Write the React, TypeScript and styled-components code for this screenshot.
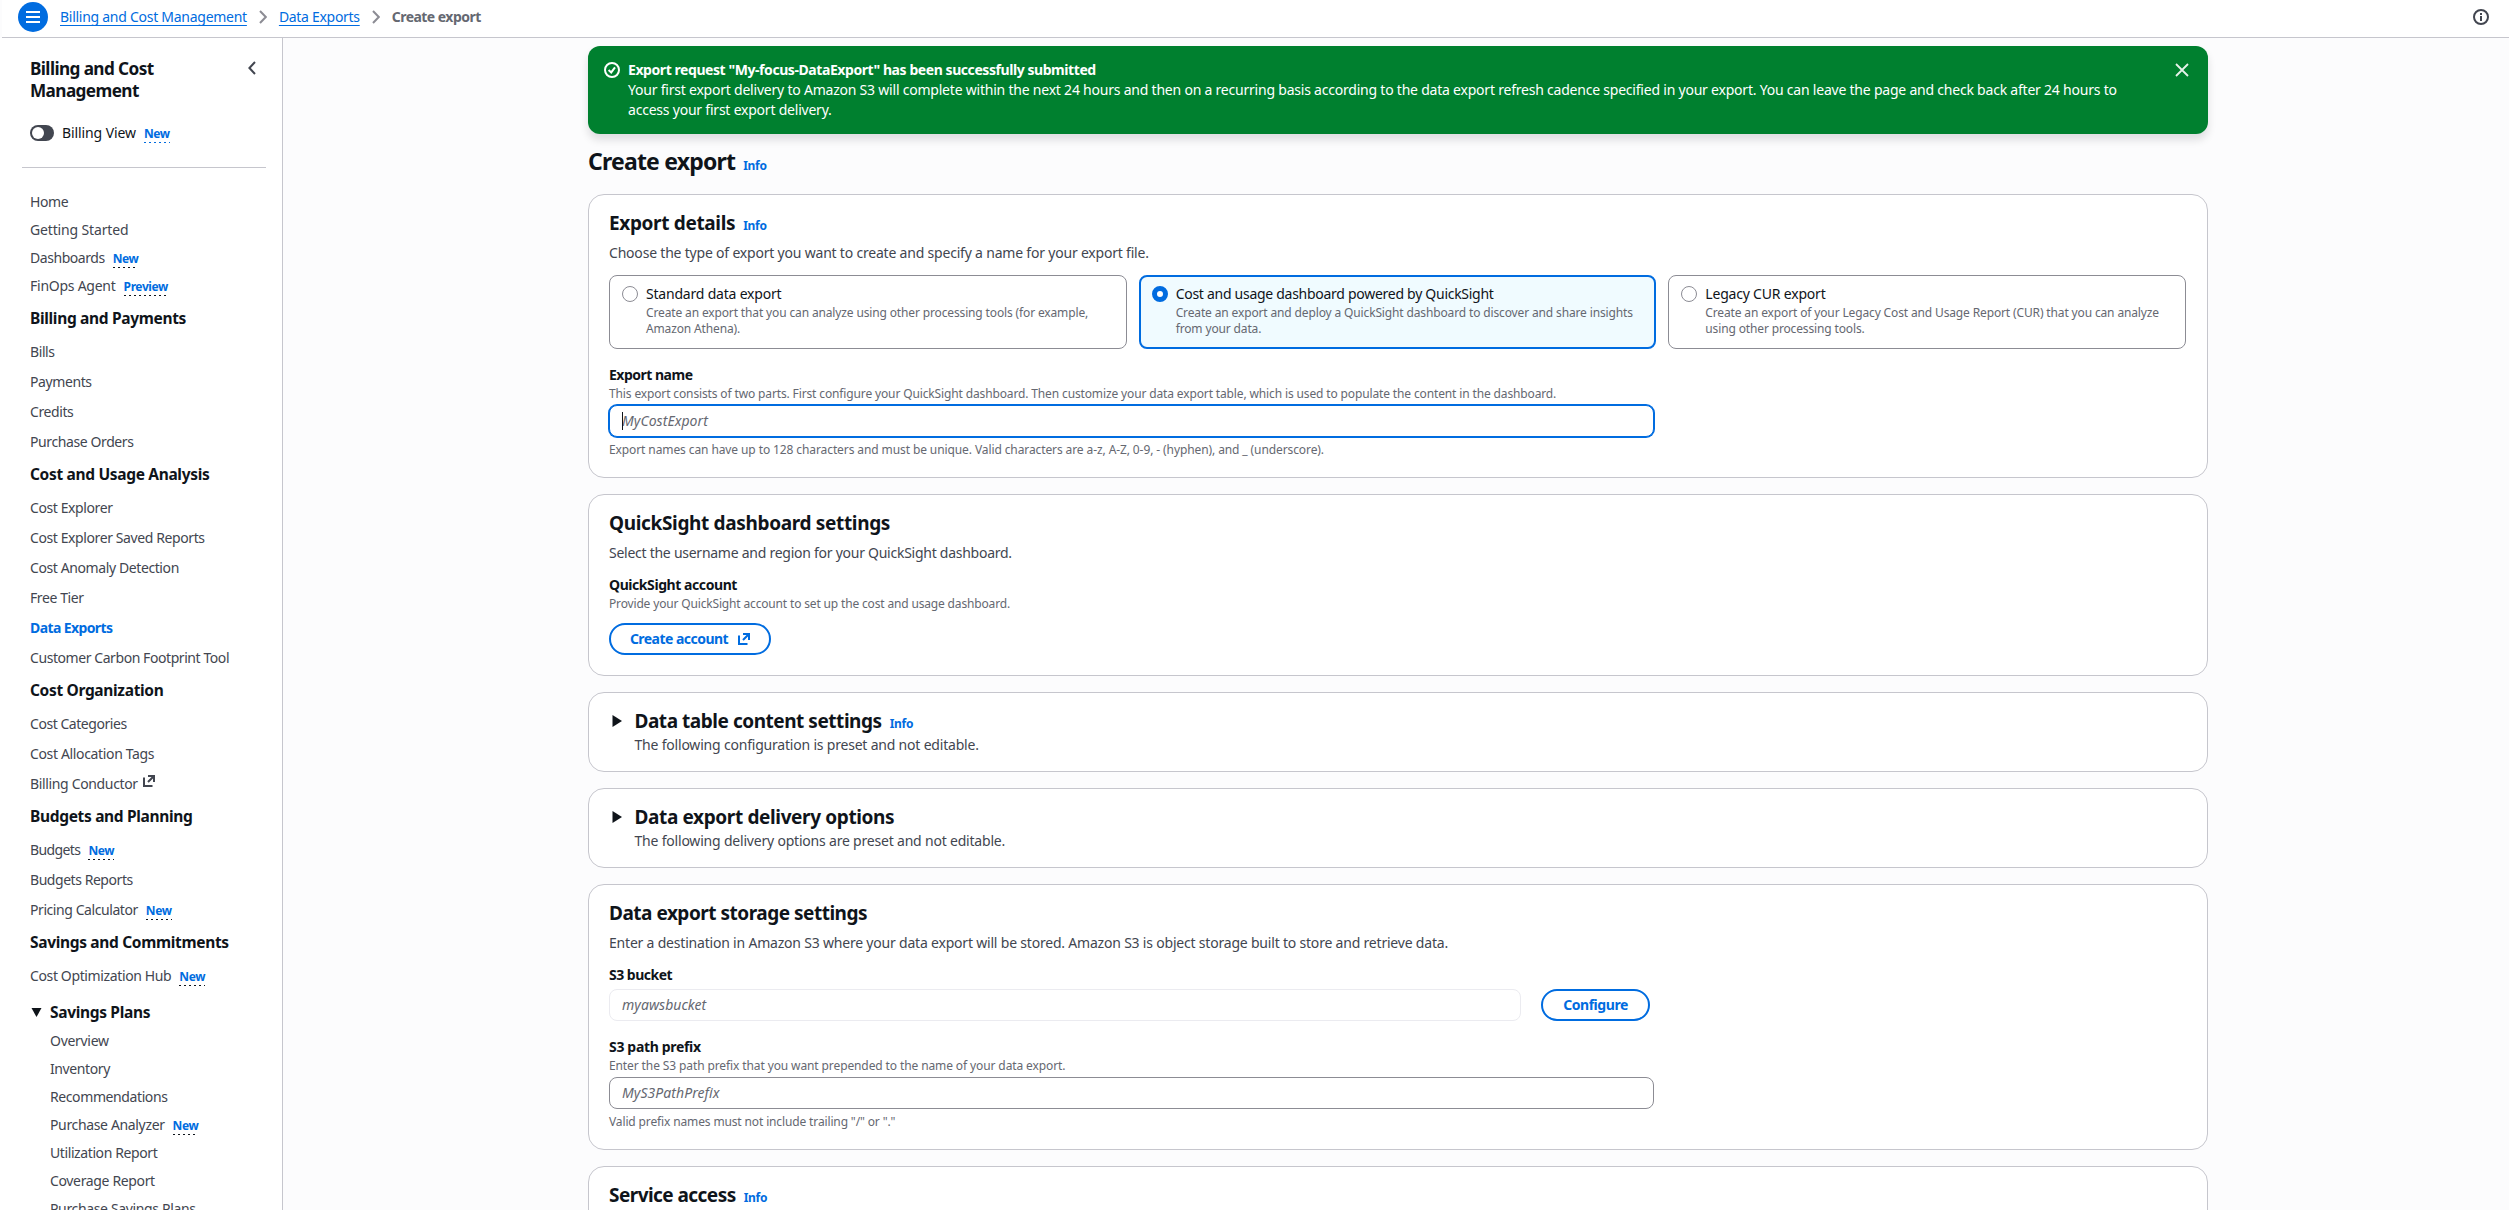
import React from "react";
import styled, { createGlobalStyle, css } from "styled-components";

const color = {
  text: "#0f141a",
  body: "#424650",
  muted: "#656871",
  link: "#006ce0",
  line: "#c6c6cd",
  control: "#8c8c94",
  success: "#00802f",
};

const GlobalStyle = createGlobalStyle`
  * { box-sizing: border-box; }
  body {
    margin: 0;
    background: #fcfcfd;
    color: ${color.text};
    font: 14px/20px "Noto Sans", "Open Sans", sans-serif;
    overflow: hidden;
  }
  h1, h2, h3, p { margin: 0; }
`;

type Tracked = { $track?: number };
const tracking = (base: number) => css<Tracked>`
  letter-spacing: ${({ $track }) => $track ?? base}px;
  white-space: nowrap;
`;

/* ---------- Shell ---------- */
const Page = styled.div`
  display: flex;
  flex-direction: column;
  height: 1210px;
  overflow: hidden;
`;

const TopBar = styled.header`
  flex: none;
  display: flex;
  align-items: flex-start;
  height: 38px;
  margin-left: 2px;
  padding: 2px 20px 0 16px;
  background: #fff;
  border-bottom: 1px solid ${color.line};
`;

const MenuButton = styled.button`
  display: grid;
  place-items: center;
  width: 30px;
  height: 30px;
  padding: 0;
  border: 0;
  border-radius: 50%;
  background: ${color.link};
`;

const Breadcrumbs = styled.nav`
  display: flex;
  align-items: center;
  height: 30px;
  margin-left: 12px;
`;

const Crumb = styled.a`
  color: ${color.link};
  text-decoration: underline;
  text-decoration-thickness: 1px;
  text-decoration-skip-ink: none;
  text-underline-offset: 3px;
  ${tracking(-0.27)}
`;

const CrumbCurrent = styled.span`
  color: ${color.muted};
  font-weight: 700;
  ${tracking(-0.53)}
`;

const CrumbArrow = styled.svg`
  width: 8px;
  height: 14px;
  margin: 0 12px;
`;

const InfoButton = styled.div`
  display: flex;
  align-items: center;
  height: 30px;
  margin-left: auto;
`;

const Body = styled.div`
  display: flex;
  flex: 1;
  min-height: 0;
`;

/* ---------- Side navigation ---------- */
const Sidebar = styled.aside`
  flex: none;
  width: 283px;
  padding-top: 20px;
  background: #fff;
  border-right: 1px solid ${color.line};
  overflow: hidden;
`;

const SidebarHead = styled.div`
  display: flex;
  justify-content: space-between;
  padding: 0 26px 0 30px;
`;

const SidebarTitle = styled.h2`
  font-size: 17.2px;
  line-height: 22px;
  letter-spacing: -0.6px;
`;

const CollapseIcon = styled.svg`
  width: 8px;
  height: 14px;
  margin-top: 3px;
`;

const ToggleRow = styled.div`
  display: flex;
  align-items: baseline;
  height: 20px;
  margin: 21px 0 24px 30px;
`;

const Switch = styled.span`
  align-self: center;
  width: 24px;
  height: 16px;
  margin-right: 8px;
  padding: 2px;
  border-radius: 8px;
  background: ${color.body};

  &::before {
    content: "";
    display: block;
    width: 12px;
    height: 12px;
    border-radius: 50%;
    background: #fff;
  }
`;

const ToggleLabel = styled.span`
  ${tracking(-0.1)}
`;

const Divider = styled.hr`
  height: 1px;
  margin: 0 16px 24px 22px;
  border: 0;
  background: ${color.line};
`;

const NavGroup = styled.div<{ $gap: number; $indent?: boolean }>`
  display: flex;
  flex-direction: column;
  gap: ${({ $gap }) => $gap}px;
  padding-left: ${({ $indent }) => ($indent ? 50 : 30)}px;
`;

const NavHeading = styled.h3`
  display: flex;
  align-items: center;
  margin: 12px 0 14px 30px;
  font-size: 15.5px;
  line-height: 20px;
  ${tracking(-0.33)}
`;

const NavToggleHeading = styled(NavHeading)`
  margin: 16px 0 9px 31px;
`;

const DownTriangle = styled.svg`
  width: 11px;
  height: 9px;
  margin-right: 8px;
`;

const NavItem = styled.div`
  display: flex;
  align-items: baseline;
  height: 20px;
`;

const NavLink = styled.a<Tracked & { $active?: boolean }>`
  color: ${({ $active }) => ($active ? color.link : color.body)};
  font-weight: ${({ $active }) => ($active ? 700 : 400)};
  ${tracking(-0.4)}
`;

const NavExternal = styled.span`
  align-self: flex-start;
  display: flex;
  margin: 1px 0 0 5px;
  color: ${color.body};
`;

const Badge = styled.span<{ $dots?: string }>`
  margin-left: 8px;
  padding-bottom: 1px;
  color: ${color.link};
  font-size: 12px;
  font-weight: 700;
  line-height: 16px;
  letter-spacing: -0.4px;
  background: repeating-linear-gradient(
      to right,
      ${({ $dots }) => $dots ?? color.text} 0 2px,
      transparent 2px 5px
    )
    0 100% / 100% 1px no-repeat;
`;

/* ---------- Main content ---------- */
const Main = styled.main`
  flex: 1;
  padding: 8px 0 0 305px;
  overflow: hidden;
`;

const Content = styled.div`
  width: 1620px;
`;

const Flash = styled.section`
  display: flex;
  height: 88px;
  padding: 14px 19px 14px 16px;
  border-radius: 12px;
  background: ${color.success};
  color: #fff;
  box-shadow: 0 6px 8px rgba(0, 7, 22, 0.12);
`;

const FlashIcon = styled.svg`
  width: 16px;
  height: 16px;
  margin: 2px 8px 0 0;
`;

const FlashText = styled.div`
  width: 1510px;
`;

const FlashTitle = styled.p`
  font-weight: 700;
  letter-spacing: -0.43px;
`;

const FlashBody = styled.p`
  letter-spacing: -0.217px;
`;

const CloseIcon = styled.svg`
  width: 14px;
  height: 14px;
  margin: 3px 0 0 auto;
`;

const PageTitle = styled.h1`
  margin: 12px 0 18px;
  font-size: 23px;
  line-height: 30px;
  ${tracking(-0.8)}
`;

const InfoLink = styled.a`
  margin-left: 8px;
  color: ${color.link};
  font-size: 12px;
  font-weight: 700;
  line-height: 1;
  letter-spacing: -0.25px;
`;

const Card = styled.section`
  margin-bottom: 16px;
  padding: 16px 20px 20px;
  border: 1px solid ${color.line};
  border-radius: 16px;
  background: #fff;
`;

const LastCard = styled(Card)`
  height: 200px;
`;

const CardTitle = styled.h2`
  font-size: 19px;
  line-height: 24px;
  ${tracking(-0.44)}
`;

const CardText = styled.p`
  margin: 8px 0 12px;
  color: ${color.body};
  ${tracking(-0.2)}
`;

const ExpandCard = styled(Card)`
  display: flex;
  height: 80px;
  padding: 16px 20px 16px 23px;
`;

const ExpandText = styled.p`
  margin-top: 2px;
  color: ${color.body};
  ${tracking(-0.2)}
`;

const RightTriangle = styled.svg`
  width: 10px;
  height: 12px;
  margin: 6px 12.5px 0 0;
`;

const Tiles = styled.div`
  display: grid;
  grid-template-columns: repeat(3, 1fr);
  gap: 12px;
  margin: 0 1px 16px 0;
`;

const Tile = styled.label<{ $selected?: boolean }>`
  display: flex;
  gap: 8px;
  height: 74px;
  padding: ${({ $selected }) => ($selected ? "7px 10px" : "8px 12px")};
  padding-left: ${({ $selected }) => ($selected ? 11 : 12)}px;
  border: ${({ $selected }) =>
    $selected ? `2px solid ${color.link}` : `1px solid ${color.control}`};
  border-radius: 8px;
  background: ${({ $selected }) => ($selected ? "#f0fbff" : "#fff")};
`;

const Radio = styled.span<{ $selected?: boolean }>`
  flex: none;
  width: 16px;
  height: 16px;
  margin-top: 2px;
  border: ${({ $selected }) =>
    $selected ? `5px solid ${color.link}` : `1px solid ${color.control}`};
  border-radius: 50%;
  background: #fff;
`;

const TileTitle = styled.p`
  ${tracking(-0.2)}
`;

const TileText = styled.p`
  padding-top: 1px;
  color: ${color.muted};
  font-size: 12px;
  line-height: 16px;
  letter-spacing: -0.14px;
`;

const FieldGroup = styled.div`
  width: 1045px;

  & + & {
    margin-top: 16px;
  }
`;

const FieldLabel = styled.p`
  font-weight: 700;
  ${tracking(-0.5)}
`;

const Hint = styled.p`
  height: 16px;
  padding-top: 1px;
  color: ${color.muted};
  font-size: 12px;
  line-height: 16px;
  ${tracking(-0.135)}
`;

const Field = styled.div<{ $state?: "focus" | "disabled"; $width?: number }>`
  position: relative;
  width: ${({ $width }) => ($width ? `${$width}px` : "auto")};
  height: 32px;
  margin: 4px 0;
  padding: 5px 12px;
  border: 1px solid
    ${({ $state }) =>
      $state === "focus" ? color.link : $state === "disabled" ? "#ebebf0" : color.control};
  border-radius: 8px;
  background: #fff;
  color: ${color.muted};
  font-style: italic;
  letter-spacing: 0.05px;
  ${({ $state }) => $state === "focus" && `box-shadow: 0 0 0 1px ${color.link};`}
`;

const FieldRow = styled.div`
  display: flex;
  gap: 20px;
  height: 36px;
`;

const Caret = styled.span`
  position: absolute;
  top: 6px;
  left: 12px;
  width: 1px;
  height: 18px;
  background: ${color.text};
`;

const Button = styled.button<{ $width: number; $gapTop: number } & Tracked>`
  display: flex;
  align-items: center;
  justify-content: center;
  gap: 10px;
  width: ${({ $width }) => $width}px;
  height: 32px;
  margin: ${({ $gapTop }) => $gapTop}px 0 0;
  padding: 0;
  border: 2px solid ${color.link};
  border-radius: 16px;
  background: #fff;
  color: ${color.link};
  font: inherit;
  font-weight: 700;
  ${tracking(-0.45)}
`;

const ExternalIcon = () => (
  <svg width="12" height="12" viewBox="0 0 12 12" fill="none" stroke="currentColor" strokeWidth="2">
    <path d="M1 2.5V11H9.5" />
    <path d="M5 1H11V7M11 1L5 7" />
  </svg>
);

type Item = { label: string; badge?: string; external?: boolean; active?: boolean; track?: number };

const topItems: Item[] = [
  { label: "Home" },
  { label: "Getting Started", track: -0.15 },
  { label: "Dashboards", badge: "New", track: -0.45 },
  { label: "FinOps Agent", badge: "Preview", track: -0.25 },
];

const sections: { title: string; track?: number; items: Item[] }[] = [
  {
    title: "Billing and Payments",
    items: [{ label: "Bills" }, { label: "Payments" }, { label: "Credits" }, { label: "Purchase Orders" }],
  },
  {
    title: "Cost and Usage Analysis",
    items: [
      { label: "Cost Explorer" },
      { label: "Cost Explorer Saved Reports" },
      { label: "Cost Anomaly Detection" },
      { label: "Free Tier" },
      { label: "Data Exports", active: true, track: -0.6 },
      { label: "Customer Carbon Footprint Tool", track: -0.43 },
    ],
  },
  {
    title: "Cost Organization",
    items: [
      { label: "Cost Categories", track: -0.45 },
      { label: "Cost Allocation Tags", track: -0.35 },
      { label: "Billing Conductor", external: true, track: -0.35 },
    ],
  },
  {
    title: "Budgets and Planning",
    items: [
      { label: "Budgets", badge: "New", track: -0.6 },
      { label: "Budgets Reports", track: -0.45 },
      { label: "Pricing Calculator", badge: "New", track: -0.43 },
    ],
  },
  {
    title: "Savings and Commitments",
    items: [{ label: "Cost Optimization Hub", badge: "New", track: -0.37 }],
  },
];

const savingsPlans: Item[] = [
  { label: "Overview", track: -0.3 },
  { label: "Inventory" },
  { label: "Recommendations" },
  { label: "Purchase Analyzer", badge: "New", track: -0.35 },
  { label: "Utilization Report" },
  { label: "Coverage Report", track: -0.35 },
  { label: "Purchase Savings Plans", track: -0.35 },
];

const NavItems = ({ items }: { items: Item[] }) => (
  <>
    {items.map((item) => (
      <NavItem key={item.label}>
        <NavLink $active={item.active} $track={item.track}>
          {item.label}
        </NavLink>
        {item.badge && <Badge>{item.badge}</Badge>}
        {item.external && (
          <NavExternal>
            <ExternalIcon />
          </NavExternal>
        )}
      </NavItem>
    ))}
  </>
);

const tiles = [
  {
    title: "Standard data export",
    text: "Create an export that you can analyze using other processing tools (for example, Amazon Athena).",
  },
  {
    title: "Cost and usage dashboard powered by QuickSight",
    text: "Create an export and deploy a QuickSight dashboard to discover and share insights from your data.",
    selected: true,
    track: -0.28,
  },
  {
    title: "Legacy CUR export",
    text: "Create an export of your Legacy Cost and Usage Report (CUR) that you can analyze using other processing tools.",
  },
];

const Separator = () => (
  <CrumbArrow viewBox="0 0 8 14" fill="none" stroke={color.control} strokeWidth="2">
    <path d="M1 1L6.8 7L1 13" />
  </CrumbArrow>
);

const Expander = ({ title, text, info }: { title: string; text: string; info?: boolean }) => (
  <ExpandCard>
    <RightTriangle viewBox="0 0 10 12" fill={color.text}>
      <path d="M0.5 0L10 6L0.5 12Z" />
    </RightTriangle>
    <div>
      <CardTitle $track={info ? -0.46 : -0.37}>
        {title}
        {info && <InfoLink>Info</InfoLink>}
      </CardTitle>
      <ExpandText>{text}</ExpandText>
    </div>
  </ExpandCard>
);

export default function App() {
  return (
    <Page>
      <GlobalStyle />
      <TopBar>
        <MenuButton aria-label="Menu">
          <svg width="14" height="12" viewBox="0 0 14 12" stroke="#fff" strokeWidth="2">
            <path d="M0 1H14M0 6H14M0 11H14" />
          </svg>
        </MenuButton>
        <Breadcrumbs>
          <Crumb>Billing and Cost Management</Crumb>
          <Separator />
          <Crumb $track={-0.3}>Data Exports</Crumb>
          <Separator />
          <CrumbCurrent>Create export</CrumbCurrent>
        </Breadcrumbs>
        <InfoButton>
          <svg width="16" height="16" viewBox="0 0 16 16" fill="none" stroke={color.body} strokeWidth="2">
            <circle cx="8" cy="8" r="7" />
            <path d="M8 7V12M8 4V6" />
          </svg>
        </InfoButton>
      </TopBar>

      <Body>
        <Sidebar>
          <SidebarHead>
            <SidebarTitle>
              Billing and Cost
              <br />
              Management
            </SidebarTitle>
            <CollapseIcon viewBox="0 0 8 14" fill="none" stroke={color.body} strokeWidth="2">
              <path d="M7 1L1.4 7L7 13" />
            </CollapseIcon>
          </SidebarHead>
          <ToggleRow>
            <Switch />
            <ToggleLabel>Billing View</ToggleLabel>
            <Badge $dots={color.link}>New</Badge>
          </ToggleRow>
          <Divider />
          <NavGroup $gap={8}>
            <NavItems items={topItems} />
          </NavGroup>
          {sections.map((section) => (
            <React.Fragment key={section.title}>
              <NavHeading $track={section.track}>{section.title}</NavHeading>
              <NavGroup $gap={10}>
                <NavItems items={section.items} />
              </NavGroup>
            </React.Fragment>
          ))}
          <NavToggleHeading>
            <DownTriangle viewBox="0 0 11 9" fill={color.text}>
              <path d="M0.5 0H10.5L5.5 9Z" />
            </DownTriangle>
            Savings Plans
          </NavToggleHeading>
          <NavGroup $gap={8} $indent>
            <NavItems items={savingsPlans} />
          </NavGroup>
        </Sidebar>

        <Main>
          <Content>
            <Flash>
              <FlashIcon viewBox="0 0 16 16" fill="none" stroke="#fff" strokeWidth="2">
                <circle cx="8" cy="8" r="7" />
                <path d="M4.6 8L7.2 10.4L11 5.4" />
              </FlashIcon>
              <FlashText>
                <FlashTitle>Export request "My-focus-DataExport" has been successfully submitted</FlashTitle>
                <FlashBody>
                  Your first export delivery to Amazon S3 will complete within the next 24 hours and then on a
                  recurring basis according to the data export refresh cadence specified in your export. You can
                  leave the page and check back after 24 hours to access your first export delivery.
                </FlashBody>
              </FlashText>
              <CloseIcon viewBox="0 0 14 14" fill="none" stroke="#e6f2ea" strokeWidth="1.8">
                <path d="M1 1L13 13M13 1L1 13" />
              </CloseIcon>
            </Flash>

            <PageTitle>
              Create export
              <InfoLink>Info</InfoLink>
            </PageTitle>

            <Card>
              <CardTitle $track={-0.35}>
                Export details
                <InfoLink>Info</InfoLink>
              </CardTitle>
              <CardText>
                Choose the type of export you want to create and specify a name for your export file.
              </CardText>
              <Tiles>
                {tiles.map((tile) => (
                  <Tile key={tile.title} $selected={tile.selected}>
                    <Radio $selected={tile.selected} />
                    <div>
                      <TileTitle $track={tile.track}>{tile.title}</TileTitle>
                      <TileText>{tile.text}</TileText>
                    </div>
                  </Tile>
                ))}
              </Tiles>
              <FieldGroup>
                <FieldLabel>Export name</FieldLabel>
                <Hint>
                  This export consists of two parts. First configure your QuickSight dashboard. Then customize
                  your data export table, which is used to populate the content in the dashboard.
                </Hint>
                <Field $state="focus">
                  <Caret />
                  MyCostExport
                </Field>
                <Hint $track={-0.1}>
                  Export names can have up to 128 characters and must be unique. Valid characters are a-z, A-Z,
                  0-9, - (hyphen), and _ (underscore).
                </Hint>
              </FieldGroup>
            </Card>

            <Card>
              <CardTitle $track={-0.34}>QuickSight dashboard settings</CardTitle>
              <CardText $track={-0.26}>
                Select the username and region for your QuickSight dashboard.
              </CardText>
              <FieldLabel $track={-0.43}>QuickSight account</FieldLabel>
              <Hint $track={-0.16}>
                Provide your QuickSight account to set up the cost and usage dashboard.
              </Hint>
              <Button $width={162} $gapTop={12} $track={-0.53}>
                Create account
                <ExternalIcon />
              </Button>
            </Card>

            <Expander
              title="Data table content settings"
              text="The following configuration is preset and not editable."
              info
            />
            <Expander
              title="Data export delivery options"
              text="The following delivery options are preset and not editable."
            />

            <Card>
              <CardTitle $track={-0.49}>Data export storage settings</CardTitle>
              <CardText>
                Enter a destination in Amazon S3 where your data export will be stored. Amazon S3 is object
                storage built to store and retrieve data.
              </CardText>
              <FieldGroup>
                <FieldLabel>S3 bucket</FieldLabel>
                <FieldRow>
                  <Field $state="disabled" $width={912}>
                    myawsbucket
                  </Field>
                  <Button $width={109} $gapTop={4}>
                    Configure
                  </Button>
                </FieldRow>
              </FieldGroup>
              <FieldGroup>
                <FieldLabel $track={-0.33}>S3 path prefix</FieldLabel>
                <Hint $track={-0.11}>
                  Enter the S3 path prefix that you want prepended to the name of your data export.
                </Hint>
                <Field>MyS3PathPrefix</Field>
                <Hint>Valid prefix names must not include trailing "/" or "."</Hint>
              </FieldGroup>
            </Card>

            <LastCard>
              <CardTitle $track={-0.55}>
                Service access
                <InfoLink>Info</InfoLink>
              </CardTitle>
            </LastCard>
          </Content>
        </Main>
      </Body>
    </Page>
  );
}
